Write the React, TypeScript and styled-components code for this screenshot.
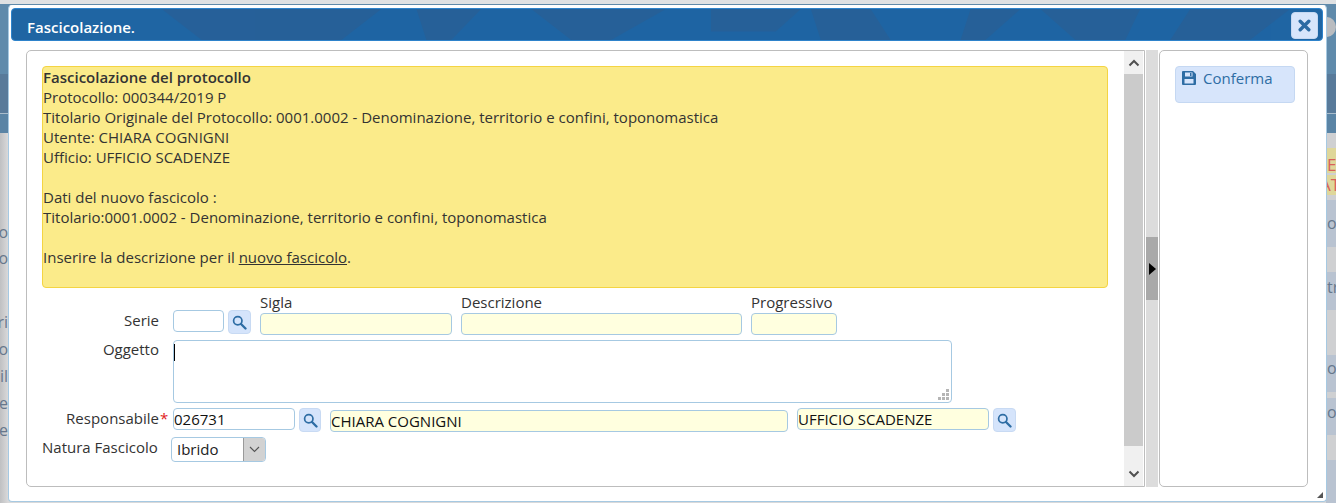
import styled, { createGlobalStyle } from "styled-components";

const GlobalStyle = createGlobalStyle`
  html, body {
    margin: 0;
    padding: 0;
    height: 100%;
    overflow: hidden;
    background: #cfd0d2;
  }
  body {
    font-family: "Open Sans", "Liberation Sans", sans-serif;
    font-size: 15px;
    color: #333;
  }
`;

const Page = styled.div`
  position: relative;
  width: 1336px;
  height: 503px;
  overflow: hidden;
`;

const PageTop = styled.div`
  height: 133px;
  border-top: 4px solid #dfe1e3;
  box-sizing: border-box;
  background: linear-gradient(180deg, #5f8aab 0, #5f8aab 70px, #587a9a 70px, #587a9a 109px, #a9bccb 109px, #a9bccb 110px, #5a84a5 110px);
`;

const PageDisc = styled.span`
  position: absolute;
  left: 1318px;
  top: 17px;
  width: 18px;
  height: 20px;
  border-radius: 50%;
  background: #b9bcc0;
`;

const PageBody = styled.div`
  display: flex;
  justify-content: space-between;
  height: 370px;
  background: linear-gradient(90deg, #bfc0c2, #d9d9da 8px, #d9d9da 1326px, #c4c5c8);
`;

const SideColumn = styled.div<{ $width: number; $flip?: boolean }>`
  width: ${(p) => p.$width}px;
  overflow: hidden;
  display: flex;
  flex-direction: column;
  direction: ${(p) => (p.$flip ? "rtl" : "ltr")};
`;

const SideRow = styled.div<{ $height: number; $tone?: string; $red?: boolean; $shift?: number; $lift?: number }>`
  height: ${(p) => p.$height}px;
  flex: none;
  line-height: ${(p) => p.$height - (p.$lift ?? 0)}px;
  font-size: ${(p) => (p.$red ? 17 : 16)}px;
  white-space: nowrap;
  padding-left: 1px;
  text-indent: ${(p) => p.$shift ?? 0}px;
  color: ${(p) => (p.$red ? "#d9605a" : "#66778c")};
  background: ${(p) => p.$tone ?? "transparent"};
`;

const Dialog = styled.div`
  position: absolute;
  left: 8px;
  top: 5px;
  width: 1319px;
  height: 497px;
  box-sizing: border-box;
  padding: 2px 3px 3px;
  display: flex;
  flex-direction: column;
  background: #fff;
  border: 1px solid #a6c9e2;
  border-top-color: #fff;
  border-radius: 4px;
`;

const TitleBar = styled.div`
  position: relative;
  flex: none;
  height: 33px;
  box-sizing: border-box;
  margin-left: -1px;
  display: flex;
  align-items: center;
  justify-content: space-between;
  padding: 2px 4px 0 15px;
  overflow: hidden;
  background: #1f65a3;
  border: 1px solid #2e83cb;
  border-radius: 4px;
`;

const TitleArt = styled.svg`
  position: absolute;
  inset: 0;
  width: 100%;
  height: 100%;
`;

const TitleText = styled.span`
  position: relative;
  top: 1px;
  color: #fff;
  font-weight: 600;
  font-size: 15px;
`;

const CloseButton = styled.button`
  position: relative;
  width: 27px;
  height: 27px;
  padding: 0;
  display: flex;
  align-items: center;
  justify-content: center;
  background: #d7e5fb;
  border: 1px solid #c5d8f2;
  border-radius: 4px;
`;

const Body = styled.div`
  flex: 1;
  min-height: 0;
  display: flex;
  padding: 9px 15px 11px 14px;
`;

const ContentPanel = styled.div`
  width: 1119px;
  flex: none;
  box-sizing: border-box;
  display: flex;
  background: #fff;
  border: 1px solid #bdbdbd;
  border-radius: 5px 0 0 5px;
`;

const ScrollArea = styled.div`
  flex: 1;
  min-width: 0;
  padding: 15px 16px 0 15px;
`;

const Notice = styled.div`
  height: 222px;
  box-sizing: border-box;
  line-height: 20px;
  background: #fbeb8a;
  border: 1px solid #f4d442;
  border-radius: 4px;
`;

const NoticeLine = styled.div<{ $bold?: boolean }>`
  min-height: 20px;
  font-weight: ${(p) => (p.$bold ? 600 : 400)};
`;

const Underlined = styled.span`
  text-decoration: underline;
`;

const Form = styled.div`
  display: flex;
  flex-direction: column;
  margin-top: 7px;
`;

const FormRow = styled.div<{ $height: number }>`
  display: flex;
  align-items: flex-start;
  height: ${(p) => p.$height}px;
`;

const RowLabel = styled.label<{ $pad: number; $inset?: number }>`
  width: 117px;
  box-sizing: border-box;
  margin-right: 14px;
  padding-top: ${(p) => p.$pad}px;
  padding-right: ${(p) => p.$inset ?? 0}px;
  flex: none;
  text-align: right;
  line-height: 18px;
  white-space: nowrap;
`;

const Star = styled.span`
  color: #e02020;
  position: absolute;
  margin-left: 1px;
`;

const LabelField = styled.div<{ $left: number; $width: number }>`
  margin-left: ${(p) => p.$left}px;
  width: ${(p) => p.$width}px;
  flex: none;
  display: flex;
  flex-direction: column;
`;

const FieldCaption = styled.span`
  line-height: 15px;
  height: 18px;
  white-space: nowrap;
`;

const TextInput = styled.input<{ $width?: number; $readOnly?: boolean; $top?: number; $left?: number }>`
  width: ${(p) => (p.$width ? `${p.$width}px` : "100%")};
  height: 22px;
  margin-top: ${(p) => p.$top ?? 0}px;
  margin-left: ${(p) => p.$left ?? 0}px;
  flex: none;
  box-sizing: border-box;
  padding: 0;
  font: 15px "Open Sans", "Liberation Sans", sans-serif;
  color: #111;
  background: ${(p) => (p.$readOnly ? "#ffffdf" : "#fff")};
  border: 1px solid #a6c9e2;
  border-radius: 4px;
  outline: none;
`;

const SearchButton = styled.button<{ $left: number; $width?: number; $top?: number }>`
  width: ${(p) => p.$width ?? 23}px;
  height: 24px;
  margin-left: ${(p) => p.$left}px;
  margin-top: ${(p) => p.$top ?? 0}px;
  flex: none;
  padding: 0;
  display: flex;
  align-items: center;
  justify-content: center;
  background: #d5e4fb;
  border: 1px solid #c8daf3;
  border-radius: 4px;
`;

const MemoBox = styled.div`
  position: relative;
  width: 779px;
  height: 63px;
  box-sizing: border-box;
  background: #fff;
  border: 1px solid #a6c9e2;
  border-radius: 4px;
`;

const Caret = styled.span`
  position: absolute;
  left: 0;
  top: 3px;
  width: 1px;
  height: 17px;
  background: #000;
`;

const Grip = styled.svg`
  position: absolute;
  right: 2px;
  bottom: 2px;
`;

const SelectBox = styled.div`
  width: 95px;
  height: 25px;
  margin-left: -2px;
  box-sizing: border-box;
  display: flex;
  justify-content: space-between;
  line-height: 22px;
  padding-left: 5px;
  color: #222;
  font-size: 15px;
  background: #fff;
  border: 1px solid #a6c9e2;
  border-radius: 4px;
  overflow: hidden;
`;

const SelectArrow = styled.span`
  width: 21px;
  display: flex;
  align-items: center;
  justify-content: center;
  background: #d2d2d2;
  border-left: 1px solid #9a9a9a;
`;

const ScrollTrack = styled.div`
  width: 19px;
  margin-right: 1px;
  flex: none;
  display: flex;
  flex-direction: column;
  background: #cbcbcb;
`;

const ScrollStep = styled.div<{ $height: number }>`
  height: ${(p) => p.$height}px;
  display: flex;
  align-items: center;
  justify-content: center;
  background: #f0f0f0;
`;

const ScrollFill = styled.div`
  flex: 1;
`;

const Splitter = styled.div`
  width: 12px;
  margin-left: 1px;
  flex: none;
  display: flex;
  flex-direction: column;
  justify-content: center;
  background: #dcdcdc;
`;

const SplitterHandle = styled.div`
  height: 63px;
  display: flex;
  align-items: center;
  justify-content: center;
  background: #a9a9a9;
`;

const ActionsPanel = styled.div`
  flex: 1;
  margin-left: 1px;
  padding: 15px 12px 0 15px;
  background: #fff;
  border: 1px solid #bdbdbd;
  border-radius: 5px;
`;

const ActionButton = styled.button`
  width: 120px;
  height: 37px;
  box-sizing: border-box;
  padding: 1px 0 0 6px;
  display: flex;
  align-items: flex-start;
  gap: 7px;
  font: 15px/20px "Open Sans", "Liberation Sans", sans-serif;
  color: #2e6da4;
  background: #d7e5fb;
  border: 1px solid #c5d8f2;
  border-radius: 4px;
`;

const SaveGlyph = styled.svg`
  margin-top: 3px;
`;

const EndStepGlyph = styled.svg`
  margin-top: 16px;
`;

const ResizeHandle = styled.svg`
  position: absolute;
  right: 3px;
  bottom: 3px;
`;

const SearchIcon = () => (
  <svg width="15" height="15" viewBox="0 0 14 14">
    <circle cx="5.4" cy="5.4" r="3.9" fill="none" stroke="#2e6da4" strokeWidth="1.6" />
    <path d="M8.4 8.4 L12.6 12.6" stroke="#2e6da4" strokeWidth="2.2" strokeLinecap="round" />
  </svg>
);

const SaveIcon = () => (
  <SaveGlyph width="14" height="14" viewBox="0 0 14 14">
    <path
      fillRule="evenodd"
      fill="#2e6da4"
      d="M0 1a1 1 0 0 1 1-1h10l3 3v10a1 1 0 0 1-1 1H1a1 1 0 0 1-1-1zM3 1.5v4h7.5v-4zM8 2h1.5v3H8zM2.5 8v4.5h9V8z"
    />
  </SaveGlyph>
);

const CloseIcon = () => (
  <svg width="13" height="13" viewBox="0 0 13 13">
    <path d="M2.2 2.2 L10.8 10.8 M10.8 2.2 L2.2 10.8" stroke="#2b6aa3" strokeWidth="3.4" strokeLinecap="round" />
  </svg>
);

const leftRows = [
  { h: 86, t: "" },
  { h: 26, t: "o" },
  { h: 27, t: "o" },
  { h: 37, t: "" },
  { h: 27, t: "ri" },
  { h: 27, t: "o" },
  { h: 27, t: "il" },
  { h: 27, t: "e" },
  { h: 27, t: "e" },
];

const rightRows = [
  { h: 15, t: "", tone: "#cfd0d2" },
  { h: 25, t: "E", tone: "#dfd79a", red: true, lift: -9 },
  { h: 2, t: "", tone: "#cfd0d2" },
  { h: 20, t: "AT", tone: "#dfd79a", red: true, shift: -7 },
  { h: 5, t: "", tone: "#cfd0d2" },
  { h: 47, t: "o", tone: "#b9c3d1" },
  { h: 25, t: "", tone: "#cfd0d2" },
  { h: 38, t: "tr", tone: "#b9c3d1", lift: 8 },
  { h: 45, t: "", tone: "#cfd0d2" },
  { h: 37, t: "o", tone: "#b9c3d1", lift: 11 },
  { h: 6, t: "", tone: "#cfd0d2" },
  { h: 37, t: "o", tone: "#b9c3d1", lift: 9 },
  { h: 25, t: "", tone: "#cfd0d2" },
  { h: 43, t: "", tone: "#b9c3d1" },
];

export default function App() {
  return (
    <>
      <GlobalStyle />
      <Page>
        <PageTop />
        <PageDisc />
        <PageBody>
          <SideColumn $width={8} $flip>
            {leftRows.map((r, i) => (
              <SideRow key={i} $height={r.h}>
                {r.t}
              </SideRow>
            ))}
          </SideColumn>
          <SideColumn $width={10}>
            {rightRows.map((r, i) => (
              <SideRow key={i} $height={r.h} $tone={r.tone} $red={r.red} $shift={r.shift} $lift={r.lift}>
                {r.t}
              </SideRow>
            ))}
          </SideColumn>
        </PageBody>

        <Dialog>
          <TitleBar>
            <TitleArt viewBox="0 0 1312 33" preserveAspectRatio="none">
              <g fill="#2a5f95" opacity="0.75">
                <polygon points="150,0 370,0 330,33 190,33" />
                <polygon points="405,0 470,0 440,33 415,33" />
                <polygon points="520,0 655,0 600,33 560,33" />
                <polygon points="700,0 790,0 765,24 700,24" />
                <polygon points="800,0 860,0 880,33 810,33" />
                <polygon points="960,0 1010,0 975,33 950,33" />
                <polygon points="1030,0 1130,0 1115,33 1065,33" />
                <polygon points="1180,0 1280,0 1240,33 1160,33" />
              </g>
            </TitleArt>
            <TitleText>Fascicolazione.</TitleText>
            <CloseButton aria-label="Chiudi">
              <CloseIcon />
            </CloseButton>
          </TitleBar>
          <Body>
            <ContentPanel>
              <ScrollArea>
                <Notice>
                  <NoticeLine $bold>Fascicolazione del protocollo</NoticeLine>
                  <NoticeLine>Protocollo: 000344/2019 P</NoticeLine>
                  <NoticeLine>
                    Titolario Originale del Protocollo: 0001.0002 - Denominazione, territorio e confini, toponomastica
                  </NoticeLine>
                  <NoticeLine>Utente: CHIARA COGNIGNI</NoticeLine>
                  <NoticeLine>Ufficio: UFFICIO SCADENZE</NoticeLine>
                  <NoticeLine />
                  <NoticeLine>Dati del nuovo fascicolo :</NoticeLine>
                  <NoticeLine>Titolario:0001.0002 - Denominazione, territorio e confini, toponomastica</NoticeLine>
                  <NoticeLine />
                  <NoticeLine>
                    Inserire la descrizione per il <Underlined>nuovo fascicolo</Underlined>.
                  </NoticeLine>
                </Notice>
                <Form>
                  <FormRow $height={45}>
                    <RowLabel $pad={16}>Serie</RowLabel>
                    <TextInput $width={51} $top={15} />
                    <SearchButton $left={4} $top={15}>
                      <SearchIcon />
                    </SearchButton>
                    <LabelField $left={9} $width={192}>
                      <FieldCaption>Sigla</FieldCaption>
                      <TextInput $readOnly />
                    </LabelField>
                    <LabelField $left={9} $width={281}>
                      <FieldCaption>Descrizione</FieldCaption>
                      <TextInput $readOnly />
                    </LabelField>
                    <LabelField $left={9} $width={86}>
                      <FieldCaption>Progressivo</FieldCaption>
                      <TextInput $readOnly />
                    </LabelField>
                  </FormRow>
                  <FormRow $height={68}>
                    <RowLabel $pad={0}>Oggetto</RowLabel>
                    <MemoBox>
                      <Caret />
                      <Grip width="11" height="11" viewBox="0 0 11 11" fill="#b5b5b5">
                        <rect x="8" y="0" width="3" height="3" />
                        <rect x="4" y="4" width="3" height="3" />
                        <rect x="8" y="4" width="3" height="3" />
                        <rect x="0" y="8" width="3" height="3" />
                        <rect x="4" y="8" width="3" height="3" />
                        <rect x="8" y="8" width="3" height="3" />
                      </Grip>
                    </MemoBox>
                  </FormRow>
                  <FormRow $height={29}>
                    <RowLabel $pad={1}>
                      Responsabile<Star>*</Star>
                    </RowLabel>
                    <TextInput $width={122} defaultValue="026731" />
                    <SearchButton $left={4} $width={22}>
                      <SearchIcon />
                    </SearchButton>
                    <TextInput $readOnly $width={458} $left={9} $top={2} defaultValue="CHIARA COGNIGNI" />
                    <TextInput $readOnly $width={192} $left={9} defaultValue="UFFICIO SCADENZE" />
                    <SearchButton $left={4} $width={23}>
                      <SearchIcon />
                    </SearchButton>
                  </FormRow>
                  <FormRow $height={25}>
                    <RowLabel $pad={1} $inset={2}>
                      Natura Fascicolo
                    </RowLabel>
                    <SelectBox>
                      Ibrido
                      <SelectArrow>
                        <svg width="11" height="7" viewBox="0 0 11 7">
                          <path d="M1 1 L5.5 5.5 L10 1" fill="none" stroke="#555" strokeWidth="1.1" />
                        </svg>
                      </SelectArrow>
                    </SelectBox>
                  </FormRow>
                </Form>
              </ScrollArea>
              <ScrollTrack>
                <ScrollStep $height={23}>
                  <svg width="12" height="8" viewBox="0 0 12 8">
                    <path d="M1.5 6.5 L6 2 L10.5 6.5" fill="none" stroke="#505050" strokeWidth="2" />
                  </svg>
                </ScrollStep>
                <ScrollFill />
                <ScrollStep $height={40}>
                  <EndStepGlyph width="12" height="8" viewBox="0 0 12 8">
                    <path d="M1.5 1.5 L6 6 L10.5 1.5" fill="none" stroke="#505050" strokeWidth="2" />
                  </EndStepGlyph>
                </ScrollStep>
              </ScrollTrack>
            </ContentPanel>
            <Splitter>
              <SplitterHandle>
                <svg width="7" height="12" viewBox="0 0 7 12">
                  <path d="M0 0 L7 6 L0 12 Z" fill="#000" />
                </svg>
              </SplitterHandle>
            </Splitter>
            <ActionsPanel>
              <ActionButton>
                <SaveIcon />
                Conferma
              </ActionButton>
            </ActionsPanel>
          </Body>
          <ResizeHandle width="6" height="6" viewBox="0 0 6 6">
            <path d="M6 0 L6 6 L0 6 Z" fill="#555" />
          </ResizeHandle>
        </Dialog>
      </Page>
    </>
  );
}
